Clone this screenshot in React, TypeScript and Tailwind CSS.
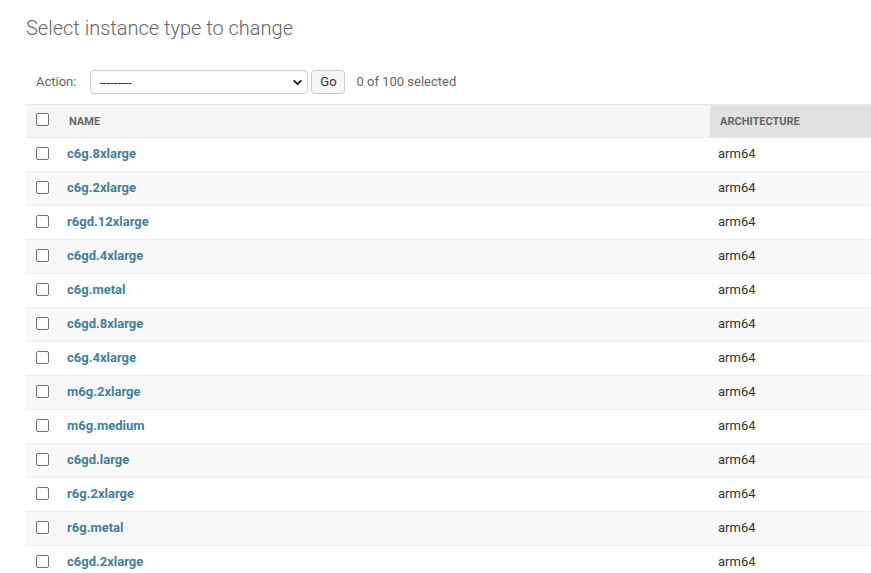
import { ChevronDown } from 'lucide-react'

const rows = [
  'c6g.8xlarge',
  'c6g.2xlarge',
  'r6gd.12xlarge',
  'c6gd.4xlarge',
  'c6g.metal',
  'c6gd.8xlarge',
  'c6g.4xlarge',
  'm6g.2xlarge',
  'm6g.medium',
  'c6gd.large',
  'r6g.2xlarge',
  'r6g.metal',
  'c6gd.2xlarge',
]

function Checkbox() {
  return (
    <input
      type="checkbox"
      className="m-0 block h-[13px] w-[13px] appearance-none rounded-[2px] border border-[#6f6f6f] bg-white"
    />
  )
}

export default function App() {
  return (
    <div className="min-h-screen bg-white pl-[26px] text-[13px] text-[#333]" style={{ fontFamily: 'Roboto, "Liberation Sans", sans-serif' }}>
      <h1 className="pt-[15px] text-[20px] font-light leading-[26px] text-[#666]">Select instance type to change</h1>

      {/* Actions */}
      <div className="mt-[29px] flex h-[24px] items-center">
        <label className="ml-[10px] text-[13px] text-[#666]">Action:</label>
        <div className="relative ml-[14px] flex h-[24px] w-[218px] items-center rounded-[4px] border border-[#ccc] bg-white pl-[8px]">
          <span className="text-[13px] leading-none text-[#333]">---------</span>
          <ChevronDown className="absolute right-[3px] top-[5px] h-[13px] w-[13px] text-[#222]" strokeWidth={3.5} />
        </div>
        <button className="ml-[3px] h-[24px] w-[34px] rounded-[4px] border border-[#ccc] bg-[#f6f6f6] text-[13px] text-[#333]">
          Go
        </button>
        <span className="ml-[11px] text-[13px] text-[#666]">0 of 100 selected</span>
      </div>

      {/* Table */}
      <table className="mt-[10px] w-full border-collapse text-left">
        <thead>
          <tr className="h-[33px] border-y border-[#e8e8e8] bg-[#f6f6f6] text-[11px] font-bold uppercase text-[#666]">
            <th className="w-[31px] pl-[10px] pt-[8px] align-top">
              <Checkbox />
            </th>
            <th className="pl-[12px] pt-[2px] font-bold">Name</th>
            <th className="w-[161px] bg-[#e1e1e1] pl-[10px] pt-[2px] font-bold">Architecture</th>
          </tr>
        </thead>
        <tbody>
          {rows.map((name, i) => (
            <tr key={name} className={`h-[34px] border-b border-[#eee] ${i % 2 === 1 ? 'bg-[#f9f9f9]' : 'bg-white'}`}>
              <td className="pl-[10px] pt-[9px] align-top">
                <Checkbox />
              </td>
              <td className="pb-[2px] pl-[10px]">
                <a href="#" className="font-bold text-[#447e9b]">{name}</a>
              </td>
              <td className="pb-[2px] pl-[8px] text-[#333]">arm64</td>
            </tr>
          ))}
        </tbody>
      </table>
    </div>
  )
}
